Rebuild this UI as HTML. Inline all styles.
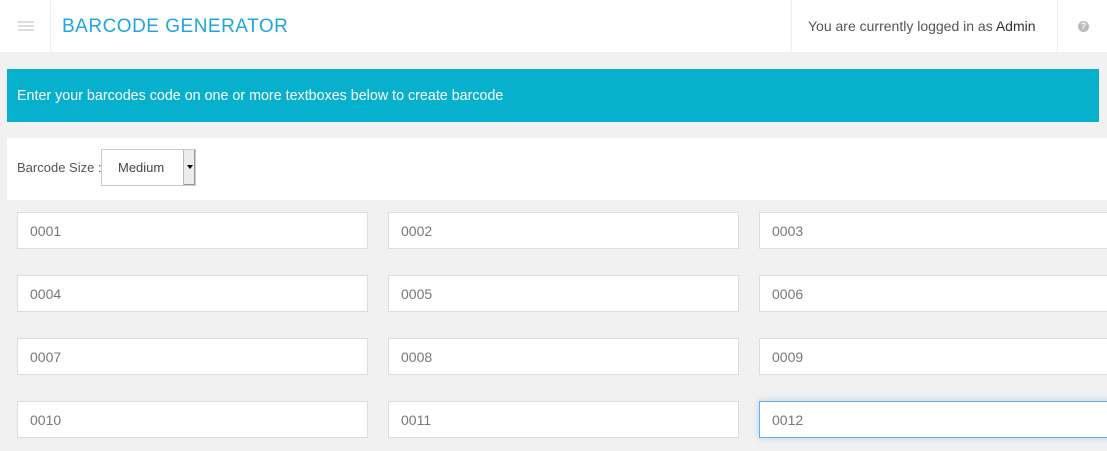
<!DOCTYPE html>
<html><head><style>
*{box-sizing:border-box;margin:0;padding:0}
body{width:1107px;height:451px;overflow:hidden;background:#f1f1f1;font-family:"Liberation Sans",sans-serif;position:relative}
.hdr{position:absolute;left:0;top:0;width:1107px;height:52px;background:#fff}
.v{position:absolute;top:0;height:52px;width:1px;background:#eee}
.bn{position:absolute;left:7px;top:69px;width:1092px;height:53px;background:#07b0cd;color:#fff;font-size:14.3px;padding:19px 0 0 10px}
.pn{position:absolute;left:7px;top:138px;width:1100px;height:62px;background:#fff}
.in{position:absolute;height:37px;background:#fff;border:1px solid #ddd;font-size:14px;color:#777;padding:10px 0 0 12px}
</style></head><body>
<div class="hdr">
 <div style="position:absolute;left:18px;top:21px;width:16px;height:2px;background:#ddd;box-shadow:0 4px 0 #ddd,0 8px 0 #ddd"></div>
 <div class="v" style="left:50px"></div>
 <div style="position:absolute;left:62px;top:16px;font-size:19px;color:#1da6e0;letter-spacing:0.5px">BARCODE GENERATOR</div>
 <div class="v" style="left:791px"></div>
 <div style="position:absolute;left:808px;top:18px;font-size:14px;color:#555">You are currently logged in as <span style="color:#333">Admin</span></div>
 <div class="v" style="left:1057px"></div>
 <div style="position:absolute;left:1078px;top:21px;width:11px;height:11px;border-radius:50%;background:#bbb;color:#fff;font-size:9px;font-weight:bold;text-align:center;line-height:11px">?</div>
</div>
<div class="bn">Enter your barcodes code on one or more textboxes below to create barcode</div>
<div class="pn">
 <div style="position:absolute;left:10px;top:22px;font-size:13px;color:#555">Barcode Size :</div>
 <div style="position:absolute;left:94px;top:11px;width:95px;height:37px;border:1px solid #ccc;font-size:13px;color:#444;padding:10px 0 0 16px">Medium
  <div style="position:absolute;right:0;top:0;width:12px;height:35px;background:#ececec;border-left:1px solid #bbb;box-shadow:inset -1px -1px 0 #999"><div style="position:absolute;left:3px;top:15px;border:3px solid transparent;border-top:4px solid #000"></div></div></div>
</div>
<div class="in" style="left:17px;top:212px;width:351px">0001</div>
<div class="in" style="left:388px;top:212px;width:351px">0002</div>
<div class="in" style="left:759px;top:212px;width:360px">0003</div>
<div class="in" style="left:17px;top:275px;width:351px">0004</div>
<div class="in" style="left:388px;top:275px;width:351px">0005</div>
<div class="in" style="left:759px;top:275px;width:360px">0006</div>
<div class="in" style="left:17px;top:338px;width:351px">0007</div>
<div class="in" style="left:388px;top:338px;width:351px">0008</div>
<div class="in" style="left:759px;top:338px;width:360px">0009</div>
<div class="in" style="left:17px;top:401px;width:351px">0010</div>
<div class="in" style="left:388px;top:401px;width:351px">0011</div>
<div class="in" style="left:759px;top:401px;width:360px;border-color:#66afe9;box-shadow:0 0 6px rgba(102,175,233,.5)">0012</div>
</body></html>
